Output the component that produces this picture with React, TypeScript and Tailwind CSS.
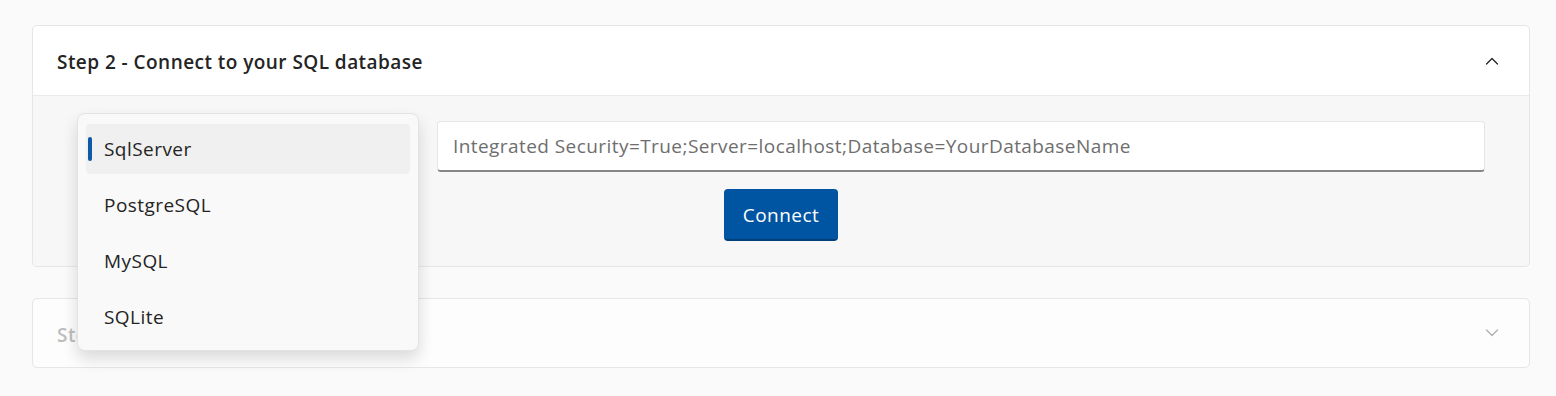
import React from "react";

const font = { fontFamily: '"Open Sans", "Noto Sans", sans-serif' };

function Chevron({ up, color }: { up: boolean; color: string }) {
  return (
    <svg width="14" height="8" viewBox="0 0 14 8" fill="none">
      <path
        d={up ? "M1.5 7 L7 1.5 L12.5 7" : "M1.5 1 L7 6.5 L12.5 1"}
        stroke={color}
        strokeWidth="1.3"
        strokeLinecap="round"
        strokeLinejoin="round"
      />
    </svg>
  );
}

export default function App() {
  const items = ["SqlServer", "PostgreSQL", "MySQL", "SQLite"];
  return (
    <div className="min-h-screen w-full bg-[#fafafa] pt-[25px]" style={font}>
      <div className="ml-[32px] w-[1498px] rounded-[5px] border border-[#e6e6e6]">
        <div className="flex h-[70px] items-center justify-between rounded-t-[5px] border-b border-[#ebebeb] bg-white pl-[24px] pr-[30px]">
          <span className="mt-[4px] text-[19px] font-semibold tracking-[0.45px] text-[#242424]">Step 2 - Connect to your SQL database</span>
          <Chevron up color="#242424" />
        </div>
        <div className="relative rounded-b-[5px] bg-[#f7f7f7] px-[44px] pb-[25px] pt-[25px]">
          <div className="flex gap-[18px]">
            <div className="h-[51px] w-[342px]" />
            <div className="flex h-[51px] flex-1 items-center rounded-[4px] border border-[#e6e6e6] border-b-2 border-b-[#868686] bg-white px-[15px]">
              <span className="text-[19px] tracking-[0.43px] text-[#6e6e6e]">Integrated Security=True;Server=localhost;Database=YourDatabaseName</span>
            </div>
          </div>
          <div className="mt-[17px] flex justify-center">
            <button className="flex h-[52px] w-[114px] items-center justify-center rounded-[4px] border-b-2 border-b-[#003f7a] bg-[#0055a2] pt-[2px] text-[19px] tracking-[0.45px] text-white">
              Connect
            </button>
          </div>
          <div className="absolute left-[44px] top-[17px] z-10 w-[342px] rounded-[8px] border border-[#e3e3e3] bg-[#f9f9f9] px-[8px] pb-[8px] pt-[10px] shadow-[0_8px_16px_rgba(0,0,0,0.14)]">
            <div className="flex flex-col gap-[6px]">
              {items.map((it, i) => (
                <div
                  key={it}
                  className={
                    i === 0
                      ? "relative flex h-[50px] items-center rounded-[4px] bg-[#f0f0f0] pl-[18px]"
                      : "relative flex h-[50px] items-center rounded-[4px] pl-[18px]"
                  }
                >
                  {i === 0 && <div className="absolute left-[2px] top-[13px] h-[24px] w-[4px] rounded-full bg-[#0f5aa6]" />}
                  <span className="text-[19px] tracking-[0.45px] text-[#242424]">{it}</span>
                </div>
              ))}
            </div>
          </div>
        </div>
      </div>
      <div className="ml-[32px] mt-[31px] flex h-[70px] w-[1498px] items-center justify-between rounded-[5px] border border-[#e6e6e6] bg-[#fdfdfd] pl-[24px] pr-[30px]">
        <span className="mt-[4px] text-[19px] font-semibold tracking-[0.45px] text-[#bdbdbd]">Step 3 - Choose the tables</span>
        <Chevron up={false} color="#b0b0b0" />
      </div>
    </div>
  );
}
